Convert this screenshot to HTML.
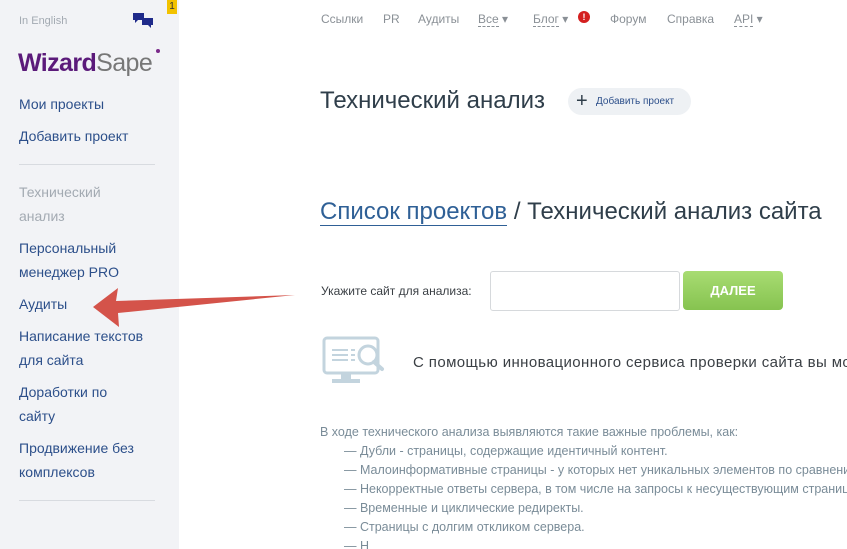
<!DOCTYPE html>
<html><head><meta charset="utf-8"><style>
*{margin:0;padding:0;box-sizing:border-box}
html,body{width:847px;height:549px;overflow:hidden}
body{background:#fff;font-family:"Liberation Sans",sans-serif;position:relative}
.side{position:absolute;left:0;top:0;width:179px;height:549px;background:#f2f3f6}
.a{position:absolute;white-space:nowrap}
.sl{position:absolute;left:19px;font-size:14px;color:#2c4f8a;line-height:24px}
.gr{color:#a3aab2}
.hr{position:absolute;left:19px;width:136px;height:1px;background:#d8dbe0}
.nav{position:absolute;top:12px;font-size:12px;color:#8a9096}
.dd{border-bottom:1px dashed #8a9096}
ul li{list-style:none}
</style></head><body>
<div class="side">
<div class="a" style="left:19px;top:15px;font-size:11px;color:#a3aab2">In English</div>
<svg class="a" style="left:132px;top:12px" width="22" height="18" viewBox="0 0 22 18"><path d="M1 1h11v7H6l-3 3V8H1z" fill="#1f2a8a"/><path d="M10 6h11v7h-2v3l-3-3h-6z" fill="#1f2a8a"/></svg>
<div class="a" style="left:167px;top:0;width:10px;height:14px;background:#f2c200;font-size:10px;text-align:center;color:#333;line-height:14px">1</div>
<div class="a" style="left:18px;top:49px;font-size:25px;font-weight:bold;letter-spacing:-0.6px"><span style="color:#5b1a7a">Wizard</span><span style="color:#777;font-weight:normal">Sape</span></div>
<div class="a" style="left:156px;top:49px;width:4px;height:4px;border-radius:50%;background:#7a2a8a"></div>
<div class="sl" style="top:92px">Мои проекты</div>
<div class="sl" style="top:124px">Добавить проект</div>
<div class="hr" style="top:164px"></div>
<div class="sl gr" style="top:180px">Технический<br>анализ</div>
<div class="sl" style="top:236px">Персональный<br>менеджер PRO</div>
<div class="sl" style="top:292px">Аудиты</div>
<div class="sl" style="top:324px">Написание текстов<br>для сайта</div>
<div class="sl" style="top:380px">Доработки по<br>сайту</div>
<div class="sl" style="top:436px">Продвижение без<br>комплексов</div>
<div class="hr" style="top:500px"></div>
</div>
<div class="nav" style="left:321px">Ссылки</div>
<div class="nav" style="left:383px">PR</div>
<div class="nav" style="left:418px">Аудиты</div>
<div class="nav" style="left:478px"><span class="dd">Все</span> ▾</div>
<div class="nav" style="left:533px"><span class="dd">Блог</span> ▾</div>
<div class="a" style="left:578px;top:11px;width:12px;height:12px;border-radius:50%;background:#d42020;color:#fff;font-size:9px;font-weight:bold;text-align:center;line-height:12px">!</div>
<div class="nav" style="left:610px">Форум</div>
<div class="nav" style="left:667px">Справка</div>
<div class="nav" style="left:734px"><span class="dd">API</span> ▾</div>
<div class="a" style="left:320px;top:87px;font-size:24px;color:#2f3e4a">Технический анализ</div>
<div class="a" style="left:568px;top:88px;width:123px;height:27px;border-radius:14px;background:#eef1f4;font-size:10px;color:#2c4f8a;line-height:27px;padding-left:28px">Добавить проект</div>
<div class="a" style="left:576px;top:89px;font-size:20px;color:#2f3e4a;line-height:24px">+</div>
<div class="a" style="left:320px;top:198px;font-size:24px;color:#2f3e4a"><span style="color:#2f6096;border-bottom:1px solid #2f6096">Список проектов</span> / Технический анализ сайта</div>
<div class="a" style="left:321px;top:284px;font-size:12px;color:#3a3f44">Укажите сайт для анализа:</div>
<div class="a" style="left:490px;top:271px;width:190px;height:40px;border:1px solid #d6d9dc;border-radius:3px"></div>
<div class="a" style="left:683px;top:271px;width:100px;height:39px;border-radius:4px;background:linear-gradient(#a8dc72,#86c350);color:#fff;font-weight:bold;font-size:13px;text-align:center;line-height:39px">ДАЛЕЕ</div>
<svg class="a" style="left:322px;top:336px" width="66" height="50" viewBox="0 0 66 50"><rect x="2" y="2" width="54" height="35" rx="3" fill="none" stroke="#c3d4de" stroke-width="3"/><rect x="19" y="37" width="10" height="6" fill="#c3d4de"/><rect x="10" y="43" width="28" height="4" fill="#c3d4de"/><g stroke="#c3d4de" stroke-width="2"><path d="M10 14h16M10 19h16M10 24h16M29 14h4M29 19h4M29 24h4"/></g><circle cx="46" cy="19" r="9" fill="#fff" stroke="#c3d4de" stroke-width="3"/><path d="M52 26l8 7" stroke="#c3d4de" stroke-width="4" stroke-linecap="round"/></svg>
<div class="a" style="left:413px;top:354px;font-size:15px;color:#3a3f44;letter-spacing:0.4px">С помощью инновационного сервиса проверки сайта вы можете</div>
<div class="a" style="left:320px;top:423px;font-size:12.5px;color:#7a8c98;line-height:19px">В ходе технического анализа выявляются такие важные проблемы, как:
<ul style="padding-left:24px">
<li>— Дубли - страницы, содержащие идентичный контент.</li>
<li>— Малоинформативные страницы - у которых нет уникальных элементов по сравнению</li>
<li>— Некорректные ответы сервера, в том числе на запросы к несуществующим страницам</li>
<li>— Временные и циклические редиректы.</li>
<li>— Страницы с долгим откликом сервера.</li>
<li>— Н</li>
</ul></div>
<svg class="a" style="left:0;top:0" width="847" height="549"><path d="M93 307L118 288L116 301L295 295L118 313L119 327Z" fill="#d4534a"/></svg>
</body></html>
